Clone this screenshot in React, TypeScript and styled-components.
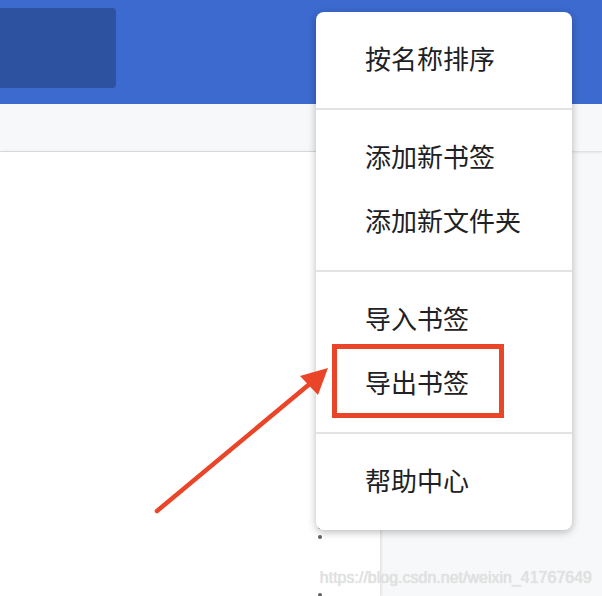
import styled, { createGlobalStyle } from 'styled-components';

const GlobalStyle = createGlobalStyle`
  html, body {
    margin: 0;
    padding: 0;
    background: #f7f8fa;
  }
  body {
    font-family: 'Noto Sans CJK SC', 'Noto Sans', sans-serif;
  }
`;

const Page = styled.div`
  position: relative;
  width: 602px;
  height: 596px;
  overflow: hidden;
  display: flex;
  flex-direction: column;
  background: #f7f8fa;
`;

const Header = styled.header`
  height: 104px;
  flex-shrink: 0;
  box-sizing: border-box;
  padding-top: 8px;
  background: #3c6acf;
`;

const SearchBox = styled.div`
  width: 116px;
  height: 80px;
  background: #2c52a0;
  border-radius: 0 4px 4px 0;
`;

const Toolbar = styled.div`
  height: 47px;
  flex-shrink: 0;
  background: #f7f8fa;
  border-bottom: 1px solid #e1e2e4;
  box-shadow: 0 1px 2px rgba(0, 0, 0, 0.08);
`;

const Body = styled.div`
  flex: 1;
  display: flex;
  min-height: 0;
`;

const Panel = styled.section`
  width: 380px;
  background: #fff;
  box-shadow: 1px 0 3px rgba(0, 0, 0, 0.12);
  box-sizing: border-box;
  padding: 24px 58px 0 0;
  display: flex;
  flex-direction: column;
`;

const Row = styled.div`
  height: 78px;
  flex-shrink: 0;
  display: flex;
  align-items: center;
  justify-content: flex-end;
`;

const Kebab = styled.div`
  display: flex;
  flex-direction: column;
  gap: 5.5px;
  & > span {
    width: 4.5px;
    height: 4.5px;
    border-radius: 50%;
    background: #5f6368;
  }
`;

const Menu = styled.nav`
  position: absolute;
  left: 316px;
  top: 12px;
  width: 256px;
  background: #fff;
  border-radius: 8px;
  box-shadow: 0 2px 8px rgba(0, 0, 0, 0.28);
`;

const Group = styled.div`
  padding: 16px 0;
  & + & {
    border-top: 2px solid #e3e3e3;
  }
`;

const Item = styled.div`
  height: 64px;
  box-sizing: border-box;
  padding: 0 0 6px 49px;
  display: flex;
  align-items: center;
  font-size: 26px;
  color: #202124;
  white-space: nowrap;
`;

const Highlight = styled.div`
  position: absolute;
  left: 332px;
  top: 344px;
  width: 172px;
  height: 74px;
  box-sizing: border-box;
  border: 5px solid #ea4529;
`;

const Arrow = styled.svg`
  position: absolute;
  left: 0;
  top: 0;
  pointer-events: none;
`;

const Watermark = styled.div`
  position: absolute;
  right: 10px;
  bottom: 9px;
  font-family: 'Liberation Sans', Arial, sans-serif;
  font-size: 16px;
  color: #e2e2e2;
  text-shadow: 0 0 1px #cfcfcf;
  white-space: nowrap;
`;

const groups = [
  ['按名称排序'],
  ['添加新书签', '添加新文件夹'],
  ['导入书签', '导出书签'],
  ['帮助中心'],
];

export default function App() {
  return (
    <>
      <GlobalStyle />
      <Page>
        <Header>
          <SearchBox />
        </Header>
        <Toolbar />
        <Body>
          <Panel>
            {Array.from({ length: 6 }).map((_, i) => (
              <Row key={i}>
                <Kebab>
                  <span />
                  <span />
                  <span />
                </Kebab>
              </Row>
            ))}
          </Panel>
        </Body>

        <Menu>
          {groups.map((g, i) => (
            <Group key={i}>
              {g.map((label) => (
                <Item key={label}>{label}</Item>
              ))}
            </Group>
          ))}
        </Menu>

        <Highlight />
        <Arrow width="602" height="596" viewBox="0 0 602 596">
          <line x1="157" y1="511" x2="312" y2="382" stroke="#ea4529" strokeWidth="4.5" strokeLinecap="round" />
          <polygon points="328,368 300,376 318,395" fill="#ea4529" />
        </Arrow>
        <Watermark>https://blog.csdn.net/weixin_41767649</Watermark>
      </Page>
    </>
  );
}
